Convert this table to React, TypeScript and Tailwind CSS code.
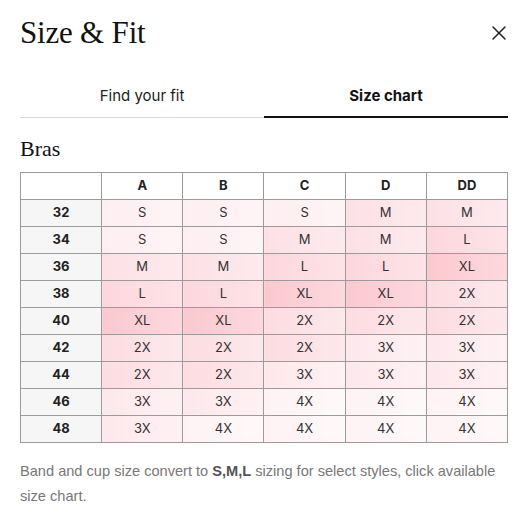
import { X } from "lucide-react";

const cups = ["A", "B", "C", "D", "DD"];

const rows: [string, string[]][] = [
  ["32", ["S", "S", "S", "M", "M"]],
  ["34", ["S", "S", "M", "M", "L"]],
  ["36", ["M", "M", "L", "L", "XL"]],
  ["38", ["L", "L", "XL", "XL", "2X"]],
  ["40", ["XL", "XL", "2X", "2X", "2X"]],
  ["42", ["2X", "2X", "2X", "3X", "3X"]],
  ["44", ["2X", "2X", "3X", "3X", "3X"]],
  ["46", ["3X", "3X", "4X", "4X", "4X"]],
  ["48", ["3X", "4X", "4X", "4X", "4X"]],
];

// shade per size, written out so tailwind picks them up
const shade: Record<string, string> = {
  S: "bg-gradient-to-r from-[#fdeef1] to-[#fef4f6]",
  M: "bg-gradient-to-r from-[#fde0e5] to-[#fdeaee]",
  L: "bg-gradient-to-r from-[#fcd7dd] to-[#fde3e7]",
  XL: "bg-gradient-to-r from-[#fbc9d0] to-[#fcd8dd]",
  "2X": "bg-gradient-to-r from-[#fcdce1] to-[#fde8ec]",
  "3X": "bg-gradient-to-r from-[#fde8ec] to-[#fef1f3]",
  "4X": "bg-gradient-to-r from-[#fef2f4] to-[#fff8f9]",
};

const sans = "font-['Inter','Open_Sans',sans-serif]";
const serif = "font-['Liberation_Serif','DejaVu_Serif',serif]";

export default function App() {
  return (
    <div className={`w-[527px] h-[515px] bg-white pl-5 pr-[19px] ${sans}`}>
      <div className="flex items-center justify-between h-[62px] pt-1">
        <h1 className={`${serif} text-[31px] text-[#111] tracking-[-0.2px]`}>Size &amp; Fit</h1>
        <X className="w-6 h-6 text-[#222] -mr-[3px]" strokeWidth={1.5} />
      </div>

      <div className="grid grid-cols-2 mt-[14px]">
        <button className="h-[42px] border-b border-[#d9d9d9] text-[15px] text-[#222]">Find your fit</button>
        <button className="h-[42px] border-b-2 border-[#111] text-[15px] font-bold text-[#111]">Size chart</button>
      </div>

      <h2 className={`${serif} text-[22px] text-[#111] mt-[17px] leading-7`}>Bras</h2>

      <table className="w-full table-fixed border-collapse mt-[9px] text-[13px] text-[#333]">
        <thead>
          <tr className="h-[27px]">
            <th className="border border-[#9b9b9b] bg-white"></th>
            {cups.map((c) => (
              <th key={c} className="border border-[#9b9b9b] bg-white font-bold text-[#222]">{c}</th>
            ))}
          </tr>
        </thead>
        <tbody>
          {rows.map(([band, sizes]) => (
            <tr key={band} className="h-[27px]">
              <td className="border border-[#9b9b9b] bg-[#f6f6f6] text-center font-bold text-[#222]">{band}</td>
              {sizes.map((s, i) => (
                <td key={i} className={`border border-[#9b9b9b] text-center ${shade[s]}`}>{s}</td>
              ))}
            </tr>
          ))}
        </tbody>
      </table>

      <p className="mt-[16px] font-['Liberation_Sans','Arial',sans-serif] text-[14.6px] leading-[25px] text-[#787878]">
        Band and cup size convert to <b className="text-[#555]">S,M,L</b> sizing for select styles, click available size chart.
      </p>
    </div>
  );
}
